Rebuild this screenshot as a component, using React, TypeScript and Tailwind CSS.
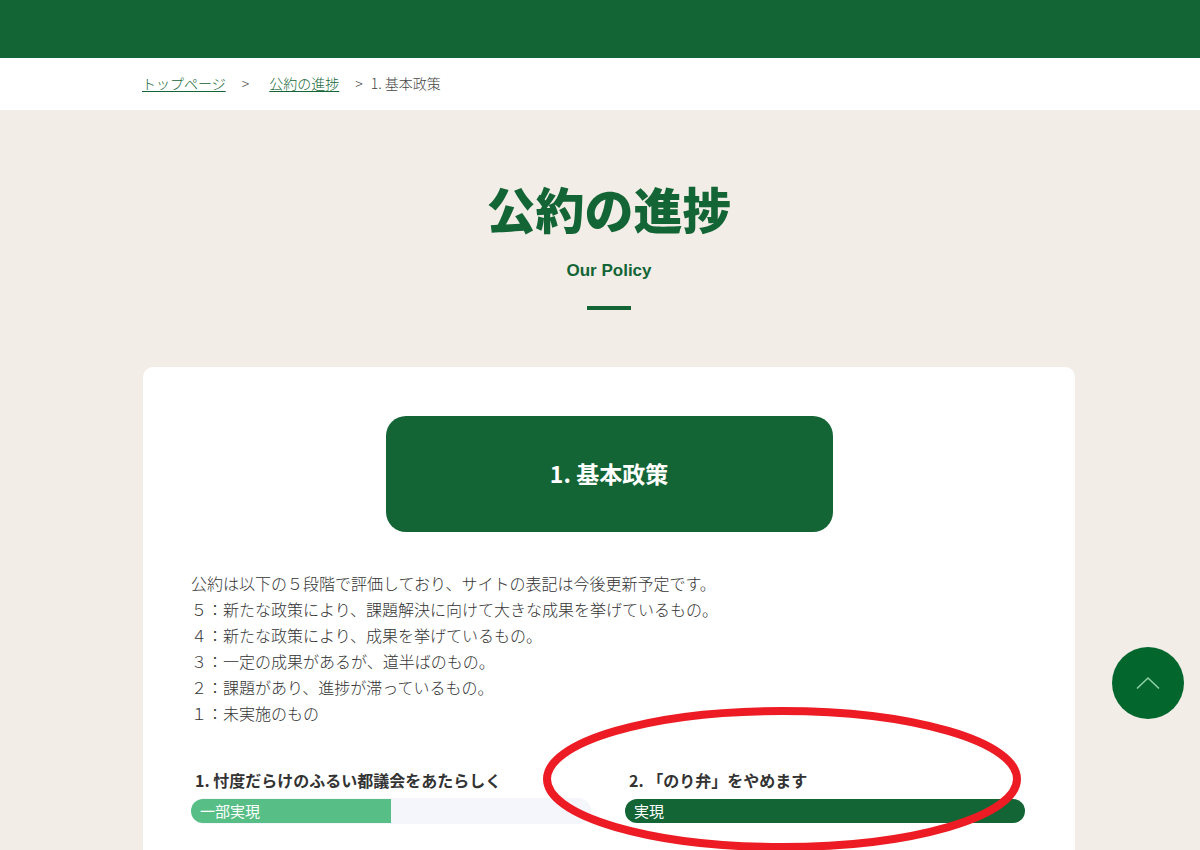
type Policy = {
  title: string;
  status: string;
  progress: number;
  highlighted?: boolean;
};

const policies: Policy[] = [
  { title: '1. 忖度だらけのふるい都議会をあたらしく', status: '一部実現', progress: 50 },
  { title: '2. 「のり弁」をやめます', status: '実現', progress: 100, highlighted: true },
];

const criteria = [
  '公約は以下の５段階で評価しており、サイトの表記は今後更新予定です。',
  '５：新たな政策により、課題解決に向けて大きな成果を挙げているもの。',
  '４：新たな政策により、成果を挙げているもの。',
  '３：一定の成果があるが、道半ばのもの。',
  '２：課題があり、進捗が滞っているもの。',
  '１：未実施のもの',
];

function Breadcrumb() {
  return (
    <nav
      aria-label="パンくずリスト"
      className="flex h-[52px] items-center bg-white pb-0.5 pl-[142px] text-sm font-light text-[#444]"
    >
      <a href="#top" className="text-[#136536] underline underline-offset-2">
        トップページ
      </a>
      <span className="mx-4">&gt;</span>
      <a href="#policy" className="ml-1 text-[#136536] underline underline-offset-2">
        公約の進捗
      </a>
      <span className="mr-2 ml-4">&gt;</span>
      <span>1. 基本政策</span>
    </nav>
  );
}

function PolicyItem({ policy }: { policy: Policy }) {
  const complete = policy.progress === 100;
  return (
    <li className="relative min-w-0">
      <h3 className="pl-1 text-base leading-6 font-bold whitespace-nowrap text-[#333]">{policy.title}</h3>
      <div
        role="progressbar"
        aria-label={policy.title}
        aria-valuenow={policy.progress}
        className={`mt-1.5 flex h-[26px] items-center rounded-full ${complete ? '' : 'bg-[#f5f6fb]'}`}
      >
        <div
          className={`flex h-6 items-center pb-0.5 pl-[9px] text-[15px] leading-none text-white ${
            complete ? 'rounded-full bg-[#136536]' : 'rounded-l-full bg-[#57be86]'
          }`}
          style={{ width: `${policy.progress}%` }}
        >
          {policy.status}
        </div>
      </div>
      {policy.highlighted && (
        <svg
          aria-hidden="true"
          viewBox="0 0 478 144"
          className="pointer-events-none absolute -top-[61px] -left-[82px] h-[144px] w-[478px] max-w-none"
        >
          <ellipse cx="239" cy="72" rx="235" ry="68" fill="none" stroke="#ed1c24" strokeWidth="8" />
        </svg>
      )}
    </li>
  );
}

export default function App() {
  return (
    <div
      lang="ja"
      className="min-h-screen overflow-x-hidden bg-[#f2ede7] font-['Noto_Sans_CJK_JP',sans-serif]"
    >
      <header className="h-[58px] bg-[#136536]" />
      <Breadcrumb />
      <main className="pr-[125px] pl-[143px]">
        <div className="flex flex-col items-center pt-[65px] text-[#136536]">
          <h1 className="text-[49px] leading-[66px] font-black">公約の進捗</h1>
          <p className="mt-[18px] font-['Liberation_Sans',sans-serif] text-[17px] leading-6 font-bold">
            Our Policy
          </p>
          <div className="mt-[23px] h-1 w-11 bg-[#136536]" />
        </div>
        <section className="mt-[57px] rounded-[10px] bg-white px-12 pt-[49px] pb-12">
          <h2 className="mx-auto flex h-[116px] max-w-[447px] items-center justify-center rounded-[20px] bg-[#136536] pb-0.5 text-[23px] font-bold text-white">
            1. 基本政策
          </h2>
          <div className="mt-[38px] text-base leading-[26px] font-light text-[#333]">
            {criteria.map((line) => (
              <p key={line}>{line}</p>
            ))}
          </div>
          <ul className="mt-[42px] mr-0.5 grid grid-cols-2 gap-[34px]">
            {policies.map((policy) => (
              <PolicyItem key={policy.title} policy={policy} />
            ))}
          </ul>
        </section>
      </main>
      <button
        type="button"
        aria-label="ページの先頭へ"
        className="fixed right-4 bottom-[131px] flex size-[72px] items-center justify-center rounded-full bg-[#03662d]"
      >
        <svg viewBox="0 0 24 14" className="h-3.5 w-6" fill="none" stroke="#8fcfa6" strokeWidth="1.6">
          <path d="M1 12.500 12 2l11 10.500" />
        </svg>
      </button>
    </div>
  );
}
